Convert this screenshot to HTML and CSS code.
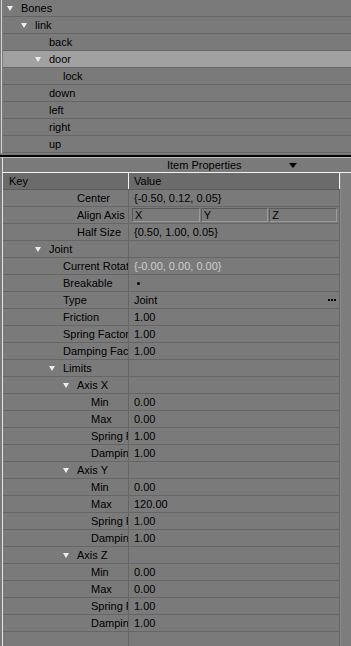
FILE: index.html
```html
<!DOCTYPE html>
<html lang="en">
<head>
    <meta charset="UTF-8">
    <meta name="viewport" content="width=device-width, initial-scale=1.0">
    <title>Bones</title>
    <link rel="stylesheet" href="styles.css">
</head>
<body>
    <!-- Bone hierarchy -->
    <div class="tree">
        <div class="node l0"><span class="twisty open"></span>Bones</div>
        <div class="node l1"><span class="twisty open"></span>link</div>
        <div class="node l2"><span class="twisty"></span>back</div>
        <div class="node l2 selected"><span class="twisty open"></span>door</div>
        <div class="node l3"><span class="twisty"></span>lock</div>
        <div class="node l2"><span class="twisty"></span>down</div>
        <div class="node l2"><span class="twisty"></span>left</div>
        <div class="node l2"><span class="twisty"></span>right</div>
        <div class="node l2"><span class="twisty"></span>up</div>
    </div>

    <div class="splitter"></div>

    <!-- Item properties -->
    <div class="props">
        <div class="props-title">
            <span class="title">Item Properties</span>
            <span class="drop"></span>
        </div>
        <div class="props-body">
            <div class="grid">
                <div class="grid-head">
                    <div class="key">Key</div>
                    <div class="val">Value</div>
                </div>
                <div class="prow"><div class="key l4"><span class="twisty"></span>Center</div><div class="val">{-0.50, 0.12, 0.05}</div></div>
                <div class="prow">
                    <div class="key l4"><span class="twisty"></span>Align Axis</div>
                    <div class="val boxes">
                        <div class="axis">X</div>
                        <div class="axis">Y</div>
                        <div class="axis">Z</div>
                    </div>
                </div>
                <div class="prow"><div class="key l4"><span class="twisty"></span>Half Size</div><div class="val">{0.50, 1.00, 0.05}</div></div>
                <div class="prow"><div class="key l2"><span class="twisty open"></span>Joint</div><div class="val"></div></div>
                <div class="prow"><div class="key l3"><span class="twisty"></span>Current Rotat</div><div class="val disabled">{-0.00, 0.00, 0.00}</div></div>
                <div class="prow"><div class="key l3"><span class="twisty"></span>Breakable</div><div class="val"><span class="check"></span></div></div>
                <div class="prow">
                    <div class="key l3"><span class="twisty"></span>Type</div>
                    <div class="val">Joint<span class="more"><i></i><i></i><i></i></span></div>
                </div>
                <div class="prow"><div class="key l3"><span class="twisty"></span>Friction</div><div class="val">1.00</div></div>
                <div class="prow"><div class="key l3"><span class="twisty"></span>Spring Factor</div><div class="val">1.00</div></div>
                <div class="prow"><div class="key l3"><span class="twisty"></span>Damping Fac</div><div class="val">1.00</div></div>
                <div class="prow"><div class="key l3"><span class="twisty open"></span>Limits</div><div class="val"></div></div>

                <div class="prow"><div class="key l4"><span class="twisty open"></span>Axis X</div><div class="val"></div></div>
                <div class="prow"><div class="key l5"><span class="twisty"></span>Min</div><div class="val">0.00</div></div>
                <div class="prow"><div class="key l5"><span class="twisty"></span>Max</div><div class="val">0.00</div></div>
                <div class="prow"><div class="key l5"><span class="twisty"></span>Spring F</div><div class="val">1.00</div></div>
                <div class="prow"><div class="key l5"><span class="twisty"></span>Dampin</div><div class="val">1.00</div></div>

                <div class="prow"><div class="key l4"><span class="twisty open"></span>Axis Y</div><div class="val"></div></div>
                <div class="prow"><div class="key l5"><span class="twisty"></span>Min</div><div class="val">0.00</div></div>
                <div class="prow"><div class="key l5"><span class="twisty"></span>Max</div><div class="val">120.00</div></div>
                <div class="prow"><div class="key l5"><span class="twisty"></span>Spring F</div><div class="val">1.00</div></div>
                <div class="prow"><div class="key l5"><span class="twisty"></span>Dampin</div><div class="val">1.00</div></div>

                <div class="prow"><div class="key l4"><span class="twisty open"></span>Axis Z</div><div class="val"></div></div>
                <div class="prow"><div class="key l5"><span class="twisty"></span>Min</div><div class="val">0.00</div></div>
                <div class="prow"><div class="key l5"><span class="twisty"></span>Max</div><div class="val">0.00</div></div>
                <div class="prow"><div class="key l5"><span class="twisty"></span>Spring F</div><div class="val">1.00</div></div>
                <div class="prow"><div class="key l5"><span class="twisty"></span>Dampin</div><div class="val">1.00</div></div>
                <div class="prow"><div class="key"></div><div class="val"></div></div>
            </div>
            <div class="track"></div>
        </div>
    </div>
</body>
</html>
```

FILE: styles.css
```css
* {
    margin: 0;
    padding: 0;
    box-sizing: border-box;
}

body {
    width: 351px;
    height: 646px;
    overflow: hidden;
    background: #7a7a7a;
    color: #000;
    font-family: 'Liberation Sans', Arial, sans-serif;
    font-size: 11px;
    line-height: 16px;
}

/* Tree */
.tree {
    margin-left: 1px;
    border-left: 1px solid #d6d6d6;
    padding-left: 1px;
}

.node {
    display: flex;
    align-items: center;
    height: 17px;
    border-bottom: 1px solid #666;
    white-space: nowrap;
}

.node.selected {
    background: #a1a1a1;
}

.twisty {
    flex: 0 0 15px;
    height: 16px;
    position: relative;
}

.twisty.open::before {
    content: '';
    position: absolute;
    left: 1px;
    top: 6px;
    border-left: 3px solid transparent;
    border-right: 3px solid transparent;
    border-top: 5px solid #ececec;
}

.l0 { padding-left: 3px; }
.l1 { padding-left: 17px; }
.l2 { padding-left: 31px; }
.l3 { padding-left: 45px; }
.l4 { padding-left: 59px; }
.l5 { padding-left: 73px; }

.splitter {
    margin-top: 2px;
    height: 3px;
    background: #000;
    border-bottom: 1px solid #bdbdbd;
}

/* Properties */
.props {
    margin-left: 2px;
    border-left: 1px solid #e4e4e4;
}

.props-title {
    display: flex;
    align-items: center;
    height: 15px;
    line-height: 14px;
    border-bottom: 1px solid #f2f2f2;
}

.title {
    margin-left: 164px;
}

.drop {
    margin-left: auto;
    margin-right: 54px;
    border-left: 4px solid transparent;
    border-right: 4px solid transparent;
    border-top: 5px solid #000;
}

.props-body {
    display: flex;
}

.grid {
    width: 337px;
}

.track {
    flex: 1;
    background: #7d7d7d;
    border-left: 1px solid #8a8a8a;
}

.grid-head {
    display: flex;
    height: 17px;
    background: #6b6b6b;
    border-bottom: 1px solid #5c5c5c;
}

.grid-head .key {
    padding-left: 6px;
    border-right-color: #f4f4f4;
}

.grid-head .val {
    border-right-color: #f4f4f4;
}

.prow {
    display: flex;
    height: 17px;
    border-bottom: 1px solid #666;
}

.key {
    display: flex;
    align-items: center;
    width: 126px;
    border-right: 1px solid #666;
    overflow: hidden;
    white-space: nowrap;
}

.val {
    flex: 1;
    display: flex;
    align-items: center;
    padding-left: 5px;
    border-right: 1px solid #666;
    white-space: nowrap;
}

.val.disabled {
    color: #cdcdcd;
}

.val.boxes {
    gap: 1px;
    padding: 0 2px 0 3px;
}

.axis {
    flex: 1;
    height: 14px;
    line-height: 12px;
    padding-left: 2px;
    border: 1px solid;
    border-color: #5a5a5a #9a9a9a #9a9a9a #5a5a5a;
}

.check {
    width: 3px;
    height: 3px;
    margin-left: 3px;
    border-radius: 50%;
    background: #000;
}

.more {
    display: flex;
    gap: 1px;
    margin-left: auto;
    margin-right: 3px;
}

.more i {
    width: 2px;
    height: 2px;
    background: #000;
}
```
